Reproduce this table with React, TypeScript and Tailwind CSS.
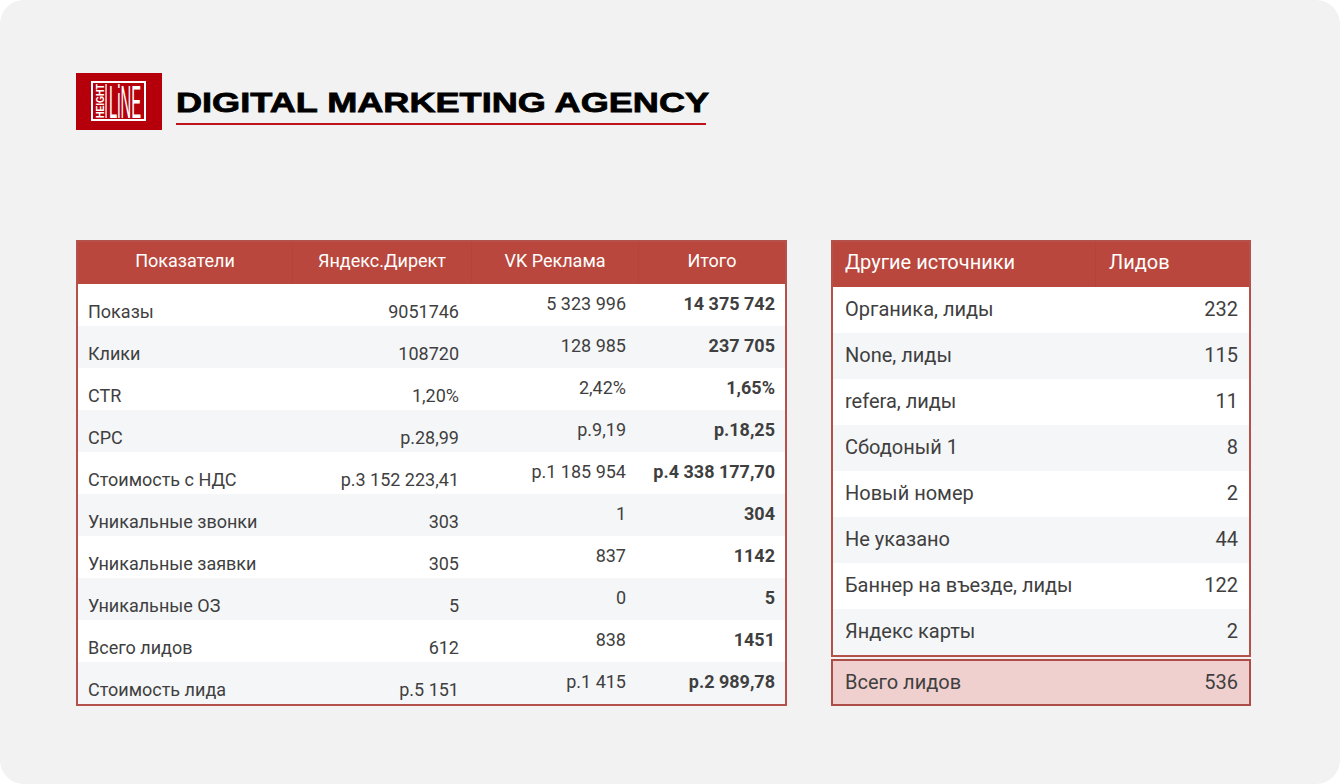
import React from 'react';

const mainRows = [
  ['Показы', '9051746', '5 323 996', '14 375 742'],
  ['Клики', '108720', '128 985', '237 705'],
  ['CTR', '1,20%', '2,42%', '1,65%'],
  ['CPC', 'р.28,99', 'р.9,19', 'р.18,25'],
  ['Стоимость с НДС', 'р.3 152 223,41', 'р.1 185 954', 'р.4 338 177,70'],
  ['Уникальные звонки', '303', '1', '304'],
  ['Уникальные заявки', '305', '837', '1142'],
  ['Уникальные ОЗ', '5', '0', '5'],
  ['Всего лидов', '612', '838', '1451'],
  ['Стоимость лида', 'р.5 151', 'р.1 415', 'р.2 989,78'],
];

const otherRows = [
  ['Органика, лиды', '232'],
  ['None, лиды', '115'],
  ['refera, лиды', '11'],
  ['Сбодоный 1', '8'],
  ['Новый номер', '2'],
  ['Не указано', '44'],
  ['Баннер на въезде, лиды', '122'],
  ['Яндекс карты', '2'],
];

const Logo = () => (
  <svg width="86" height="57" viewBox="0 0 86 57" className="shrink-0">
    <rect width="86" height="57" fill="#b5000b" />
    <rect x="16" y="9" width="53" height="38" fill="none" stroke="#fff" strokeWidth="2" />
    <text
      transform="translate(28,45) rotate(-90) scale(0.818,1)"
      fontFamily="Liberation Sans, Arial, sans-serif"
      fontWeight="bold"
      fontSize="11"
      fill="#fff"
    >
      HEIGHT
    </text>
    <rect x="29.4" y="11" width="1.3" height="34" fill="#fff" />
    <text
      transform="translate(33,45) scale(0.321,1)"
      fontFamily="Liberation Sans, Arial, sans-serif"
      fontSize="46"
      fill="#fff"
    >
      LiNE
    </text>
  </svg>
);

export default function App() {
  return (
    <div className="w-[1340px] h-[784px] bg-white">
      <div className="h-full rounded-[24px] bg-[#f2f2f2] pl-[76px] pt-[73px] font-['Roboto','Noto_Sans',sans-serif] text-[#3f3f3f]">
        {/* brand */}
        <div className="flex">
          <Logo />
          <div className="ml-[14px] pt-[16px]">
            <div className="h-[28px] whitespace-nowrap origin-left scale-x-[1.29] font-['Liberation_Sans',Arial,sans-serif] text-[28px] leading-[28px] font-bold text-black [-webkit-text-stroke:0.8px_#000]">
              DIGITAL MARKETING AGENCY
            </div>
            <div className="mt-[6px] h-[2px] w-[530px] bg-[#c0121b]" />
          </div>
        </div>

        <div className="mt-[110px] flex items-start gap-[44px]">
          {/* main table */}
          <div className="w-[711px] border-2 border-[#b3514a]">
            <div className="grid grid-cols-[214px_179px_167px_147px] h-[42px] bg-[#b9473d] text-white text-[18px] leading-[21px]">
              <div className="pt-[8px] text-center">Показатели</div>
              <div className="pt-[8px] text-center border-l border-[#b5433a]">Яндекс.Директ</div>
              <div className="pt-[8px] text-center border-l border-[#b5433a]">VK Реклама</div>
              <div className="pt-[8px] text-center border-l border-[#b5433a]">Итого</div>
            </div>
            {mainRows.map((r, i) => (
              <div
                key={r[0]}
                className={`grid grid-cols-[214px_179px_167px_147px] h-[42px] text-[18px] leading-[21px] ${
                  i % 2 === 0 ? 'bg-white' : 'bg-[#f5f6f8]'
                }`}
              >
                <div className="pl-[10px] pt-[17px] whitespace-nowrap">{r[0]}</div>
                <div className="pr-[12px] pt-[17px] text-right whitespace-nowrap">{r[1]}</div>
                <div className="pr-[12px] pt-[9px] text-right whitespace-nowrap">{r[2]}</div>
                <div className="pr-[10px] pt-[9px] text-right whitespace-nowrap font-bold">{r[3]}</div>
              </div>
            ))}
          </div>

          {/* other sources */}
          <div className="w-[420px]">
            <div className="border-2 border-[#b3514a]">
              <div className="grid grid-cols-[262px_154px] h-[45px] bg-[#b9473d] text-white text-[20px] leading-[23px]">
                <div className="pl-[12px] pt-[9px]">Другие источники</div>
                <div className="pl-[13px] pt-[9px] border-l border-[#b5433a]">Лидов</div>
              </div>
              {otherRows.map((r, i) => (
                <div
                  key={r[0]}
                  className={`grid grid-cols-[262px_154px] h-[46px] items-center pb-[2px] text-[20px] leading-[23px] ${
                    i % 2 === 0 ? 'bg-white' : 'bg-[#f5f6f8]'
                  }`}
                >
                  <div className="pl-[12px] whitespace-nowrap">{r[0]}</div>
                  <div className="pr-[11px] text-right">{r[1]}</div>
                </div>
              ))}
            </div>
            <div className="mt-[2px] h-[47px] border-2 border-[#ad4d47] bg-[#f0d0cf] flex items-center justify-between pl-[12px] pr-[11px] text-[20px] leading-[23px]">
              <span>Всего лидов</span>
              <span>536</span>
            </div>
          </div>
        </div>
      </div>
    </div>
  );
}
